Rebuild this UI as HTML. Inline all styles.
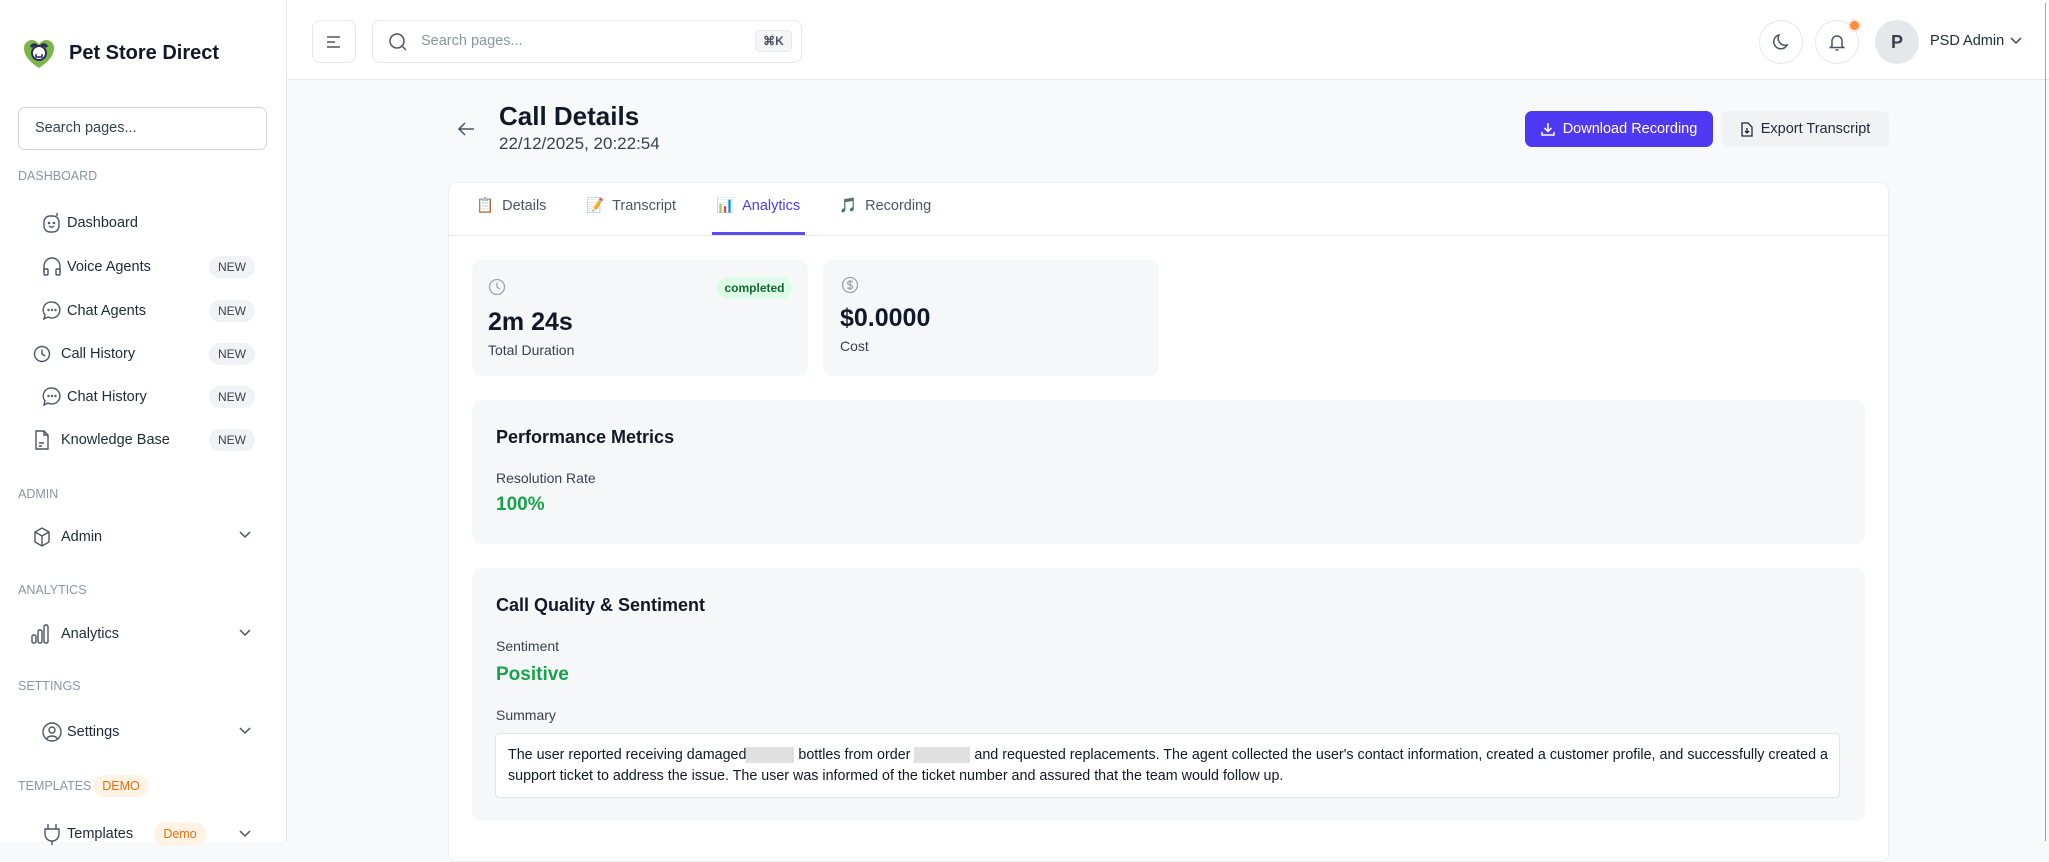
<!DOCTYPE html>
<html><head><meta charset="utf-8"><style>
*{box-sizing:border-box;margin:0;padding:0}
body{width:2049px;height:841px;overflow:hidden;background:#f8f9fb;font-family:"Liberation Sans",sans-serif;color:#111827;position:relative}
.a{position:absolute}
.sb{left:0;top:0;width:287px;height:841px;background:#fff;border-right:1px solid #e5e7eb}
.topbar{left:287px;top:0;width:1762px;height:80px;background:#fff;border-bottom:1px solid #e5e7eb}
.sec{font-size:12.5px;color:#8b93a3;left:18px}
.item{left:42px;font-size:14.5px;color:#1f2937;display:flex;align-items:center;gap:5px;height:24px}
.new{left:209px;width:46px;height:22px;border-radius:11px;background:#f1f2f5;font-size:12px;color:#374151;text-align:center;line-height:22px}
.chev{left:238px}
svg{display:block}
.btnc{border:1px solid #e5e7eb;border-radius:22px;width:44px;height:44px;display:flex;align-items:center;justify-content:center;background:#fff}
.panel{background:#f6f7f9;border-radius:10px}
.lbl{font-size:14px;color:#374151}
</style></head><body>
<div class="a" style="left:0;top:0;width:2049px;height:3px;background:#ecd9cc"></div>
<div class="a sb"></div>
<!-- logo -->
<div class="a" style="left:22px;top:38px"><svg width="34" height="32" viewBox="0 0 34 32"><path d="M17 30C8 24 2 18 2 10 2 5 6 2 10 2c3 0 5 2 7 4 2-2 4-4 7-4 4 0 8 3 8 8 0 8-6 14-15 20z" fill="#7ab648"/><circle cx="17" cy="15" r="7" fill="#fff" stroke="#2d2a5a" stroke-width="2"/><path d="M9 9c2-3 5-3 6 0M25 9c-2-3-5-3-6 0" stroke="#2d2a5a" stroke-width="3" fill="none"/><path d="M14 16v3h6v-3" stroke="#2d2a5a" stroke-width="1.5" fill="none"/></svg></div>
<div class="a" style="left:69px;top:42px;font-size:20px;font-weight:bold;color:#111827">Pet Store Direct</div>
<div class="a" style="left:18px;top:107px;width:249px;height:43px;border:1px solid #d1d5db;border-radius:7px;font-size:14.5px;color:#374151;padding:12px 16px">Search pages...</div>
<div class="a sec" style="top:169px">DASHBOARD</div>
<div class="a item" style="top:211px"><svg width="20" height="22" viewBox="0 0 20 22" fill="none" stroke="#4b5563" stroke-width="1.4"><rect x="2" y="4" width="15" height="16" rx="6"/><circle cx="7" cy="11" r=".6"/><circle cx="12" cy="11" r=".6"/><path d="M7 14c1.5 1.5 3.5 1.5 5 0M15 4V1"/></svg><span>Dashboard</span></div>
<div class="a item" style="top:255px"><svg width="20" height="22" viewBox="0 0 20 22" fill="none" stroke="#4b5563" stroke-width="1.4"><path d="M2 16v-6a8 8 0 0 1 16 0v6"/><rect x="2" y="13" width="4" height="6" rx="1"/><rect x="14" y="13" width="4" height="6" rx="1"/></svg><span>Voice Agents</span></div>
<div class="a new" style="top:256px">NEW</div>
<div class="a item" style="top:299px"><svg width="20" height="22" viewBox="0 0 20 22" fill="none" stroke="#4b5563" stroke-width="1.4"><path d="M10 2a8 8 0 1 1-4 15l-4 2 1-4A8 8 0 0 1 10 2z"/><circle cx="6.5" cy="10" r=".5"/><circle cx="10" cy="10" r=".5"/><circle cx="13.5" cy="10" r=".5"/></svg><span>Chat Agents</span></div>
<div class="a new" style="top:300px">NEW</div>
<div class="a item" style="top:342px;left:33px;gap:10px"><svg width="18" height="18" viewBox="0 0 18 18" fill="none" stroke="#4b5563" stroke-width="1.4"><circle cx="9" cy="9" r="7.5"/><path d="M9 4.5V9l3 2"/></svg><span>Call History</span></div>
<div class="a new" style="top:343px">NEW</div>
<div class="a item" style="top:385px"><svg width="20" height="22" viewBox="0 0 20 22" fill="none" stroke="#4b5563" stroke-width="1.4"><path d="M10 2a8 8 0 1 1-4 15l-4 2 1-4A8 8 0 0 1 10 2z"/><circle cx="6.5" cy="10" r=".5"/><circle cx="10" cy="10" r=".5"/><circle cx="13.5" cy="10" r=".5"/></svg><span>Chat History</span></div>
<div class="a new" style="top:386px">NEW</div>
<div class="a item" style="top:428px;left:33px;gap:10px"><svg width="18" height="20" viewBox="0 0 18 20" fill="none" stroke="#4b5563" stroke-width="1.4"><path d="M3 1h8l4 4v14H3z"/><path d="M11 1v4h4M6 13h5M6 16h3"/></svg><span>Knowledge Base</span></div>
<div class="a new" style="top:429px">NEW</div>
<div class="a sec" style="top:487px">ADMIN</div>
<div class="a item" style="top:525px;left:33px;gap:10px"><svg width="18" height="20" viewBox="0 0 18 20" fill="none" stroke="#4b5563" stroke-width="1.4"><path d="M9 1l7 4v10l-7 4-7-4V5z"/><path d="M2 5l7 4 7-4M9 9v10"/></svg><span>Admin</span></div>
<div class="a chev" style="top:530px"><svg width="14" height="10" viewBox="0 0 14 10" fill="none" stroke="#4b5563" stroke-width="1.5"><path d="M2 2l5 5 5-5"/></svg></div>
<div class="a sec" style="top:583px">ANALYTICS</div>
<div class="a item" style="top:622px;left:31px;gap:12px"><svg width="18" height="20" viewBox="0 0 18 20" fill="none" stroke="#4b5563" stroke-width="1.4"><rect x="1" y="11" width="4" height="8" rx="1.5"/><rect x="7" y="6" width="4" height="13" rx="1.5"/><rect x="13" y="1" width="4" height="18" rx="1.5"/></svg><span>Analytics</span></div>
<div class="a chev" style="top:628px"><svg width="14" height="10" viewBox="0 0 14 10" fill="none" stroke="#4b5563" stroke-width="1.5"><path d="M2 2l5 5 5-5"/></svg></div>
<div class="a sec" style="top:679px">SETTINGS</div>
<div class="a item" style="top:720px"><svg width="20" height="22" viewBox="0 0 20 22" fill="none" stroke="#4b5563" stroke-width="1.4"><circle cx="10" cy="11" r="9"/><circle cx="10" cy="9" r="3"/><path d="M4.5 18c2-4 9-4 11 0"/></svg><span>Settings</span></div>
<div class="a chev" style="top:726px"><svg width="14" height="10" viewBox="0 0 14 10" fill="none" stroke="#4b5563" stroke-width="1.5"><path d="M2 2l5 5 5-5"/></svg></div>
<div class="a sec" style="top:779px">TEMPLATES</div>
<div class="a" style="left:93px;top:775px;width:56px;height:22px;border-radius:11px;background:#fff3e6;color:#ea6c0a;font-size:12.5px;text-align:center;line-height:22px">DEMO</div>
<div class="a item" style="top:822px"><svg width="20" height="22" viewBox="0 0 20 22" fill="none" stroke="#4b5563" stroke-width="1.4"><path d="M6 1v5M14 1v5M3 6h14v5a7 7 0 0 1-14 0zM10 18v4"/></svg><span>Templates</span></div>
<div class="a" style="left:154px;top:822px;width:52px;height:24px;border-radius:12px;background:#fff3e6;color:#ea6c0a;font-size:12.5px;text-align:center;line-height:24px">Demo</div>
<div class="a chev" style="top:829px"><svg width="14" height="10" viewBox="0 0 14 10" fill="none" stroke="#4b5563" stroke-width="1.5"><path d="M2 2l5 5 5-5"/></svg></div>

<!-- topbar -->
<div class="a topbar"></div>
<div class="a" style="left:312px;top:20px;width:44px;height:43px;border:1px solid #e5e7eb;border-radius:8px;display:flex;align-items:center;justify-content:center"><svg width="16" height="14" viewBox="0 0 16 14" stroke="#4b5563" stroke-width="1.5"><path d="M1 2h13M1 7h8M1 12h13"/></svg></div>
<div class="a" style="left:372px;top:20px;width:430px;height:43px;border:1px solid #e5e7eb;border-radius:8px"></div>
<div class="a" style="left:388px;top:32px"><svg width="20" height="20" viewBox="0 0 20 20" fill="none" stroke="#4b5563" stroke-width="1.5"><circle cx="9" cy="9" r="7"/><path d="M14 14l4 4"/></svg></div>
<div class="a" style="left:421px;top:33px;font-size:14.5px;color:#8b93a3">Search pages...</div>
<div class="a" style="left:755px;top:30px;width:37px;height:22px;border:1px solid #e5e7eb;border-radius:5px;background:#f5f6f8;font-size:12px;color:#4b5563;text-align:center;line-height:20px;font-weight:bold">⌘K</div>
<div class="a btnc" style="left:1759px;top:20px"><svg width="20" height="20" viewBox="0 0 20 20" fill="none" stroke="#4b5563" stroke-width="1.5"><path d="M16 13A7 7 0 0 1 8 3a7 7 0 1 0 8 10z"/></svg></div>
<div class="a btnc" style="left:1815px;top:20px"><svg width="20" height="20" viewBox="0 0 20 20" fill="none" stroke="#4b5563" stroke-width="1.5"><path d="M5 14V9a5 5 0 0 1 10 0v5l1.5 1.5h-13zM8.5 18h3"/></svg></div>
<div class="a" style="left:1850px;top:21px;width:9px;height:9px;border-radius:5px;background:#fb8c3c;box-shadow:0 0 0 2px #fde8da"></div>
<div class="a" style="left:1875px;top:20px;width:44px;height:44px;border-radius:22px;background:#e5e7eb;font-size:18px;font-weight:bold;color:#374151;text-align:center;line-height:44px">P</div>
<div class="a" style="left:1930px;top:33px;font-size:14.5px;color:#1f2937">PSD Admin</div>
<div class="a" style="left:2010px;top:37px"><svg width="12" height="8" viewBox="0 0 12 8" fill="none" stroke="#374151" stroke-width="1.5"><path d="M1 1l5 5 5-5"/></svg></div>
<div class="a" style="left:2045px;top:3px;width:1px;height:838px;background:#9ca3af"></div>

<!-- header -->
<div class="a" style="left:456px;top:120px"><svg width="20" height="18" viewBox="0 0 20 18" fill="none" stroke="#4b5563" stroke-width="1.5"><path d="M18 9H3M9 3L3 9l6 6"/></svg></div>
<div class="a" style="left:499px;top:101px;font-size:26px;font-weight:bold;color:#111827">Call Details</div>
<div class="a" style="left:499px;top:134px;font-size:17px;color:#374151">22/12/2025, 20:22:54</div>
<div class="a" style="left:1525px;top:111px;width:188px;height:36px;background:#5039f2;border-radius:7px;color:#fff;font-size:14.5px;display:flex;align-items:center;justify-content:center;gap:8px"><svg width="14" height="14" viewBox="0 0 14 14" fill="none" stroke="#fff" stroke-width="1.5"><path d="M7 1v8M3.5 6L7 9.5 10.5 6M1 10v3h12v-3"/></svg>Download Recording</div>
<div class="a" style="left:1722px;top:111px;width:167px;height:36px;background:#f1f2f4;border-radius:7px;color:#1f2937;font-size:14.5px;display:flex;align-items:center;justify-content:center;gap:8px"><svg width="12" height="15" viewBox="0 0 12 15" fill="none" stroke="#1f2937" stroke-width="1.3"><path d="M1 1h6l4 4v9H1z"/><path d="M6 6v5M4 9l2 2 2-2"/></svg>Export Transcript</div>

<!-- card -->
<div class="a" style="left:448px;top:182px;width:1441px;height:680px;background:#fff;border-radius:8px;border:1px solid #eceef1"></div>
<div class="a" style="left:448px;top:235px;width:1441px;height:1px;background:#e5e7eb"></div>
<div class="a" style="left:476px;top:197px;font-size:14.5px;color:#4b5563">📋 <span style="margin-left:4px">Details</span></div>
<div class="a" style="left:586px;top:197px;font-size:14.5px;color:#4b5563">📝 <span style="margin-left:4px">Transcript</span></div>
<div class="a" style="left:716px;top:197px;font-size:14.5px;color:#4f39f6">📊 <span style="margin-left:4px">Analytics</span></div>
<div class="a" style="left:712px;top:232px;width:93px;height:3px;background:#5b4bf5"></div>
<div class="a" style="left:839px;top:197px;font-size:14.5px;color:#4b5563">🎵 <span style="margin-left:4px">Recording</span></div>

<div class="a panel" style="left:472px;top:260px;width:336px;height:116px"></div>
<div class="a" style="left:488px;top:278px"><svg width="18" height="18" viewBox="0 0 18 18" fill="none" stroke="#9ca3af" stroke-width="1.3"><circle cx="9" cy="9" r="7.5"/><path d="M9 4.5V9l3 2"/></svg></div>
<div class="a" style="left:717px;top:277px;width:75px;height:22px;border-radius:11px;background:#dcfce7;color:#166534;font-size:12px;font-weight:bold;text-align:center;line-height:22px">completed</div>
<div class="a" style="left:488px;top:308px;font-size:25px;font-weight:bold;color:#111827">2m 24s</div>
<div class="a" style="left:488px;top:342px;font-size:14px;color:#374151">Total Duration</div>
<div class="a panel" style="left:823px;top:260px;width:336px;height:116px"></div>
<div class="a" style="left:841px;top:276px"><svg width="18" height="18" viewBox="0 0 18 18" fill="none" stroke="#9ca3af" stroke-width="1.3"><circle cx="9" cy="9" r="7.5"/><path d="M11.5 6.5c-.5-1-1.5-1.3-2.5-1.3-1.4 0-2.4.8-2.4 1.8 0 2.5 5 1.3 5 4 0 1-1 1.8-2.6 1.8-1.1 0-2-.4-2.5-1.3M9 4v10"/></svg></div>
<div class="a" style="left:840px;top:304px;font-size:25px;font-weight:bold;color:#111827">$0.0000</div>
<div class="a" style="left:840px;top:338px;font-size:14px;color:#374151">Cost</div>

<div class="a panel" style="left:472px;top:400px;width:1393px;height:144px"></div>
<div class="a" style="left:496px;top:427px;font-size:18px;font-weight:bold">Performance Metrics</div>
<div class="a lbl" style="left:496px;top:470px">Resolution Rate</div>
<div class="a" style="left:496px;top:494px;font-size:19px;font-weight:bold;color:#16a34a">100%</div>

<div class="a panel" style="left:472px;top:568px;width:1393px;height:253px"></div>
<div class="a" style="left:496px;top:595px;font-size:18px;font-weight:bold">Call Quality &amp; Sentiment</div>
<div class="a lbl" style="left:496px;top:638px">Sentiment</div>
<div class="a" style="left:496px;top:664px;font-size:19px;font-weight:bold;color:#16a34a">Positive</div>
<div class="a lbl" style="left:496px;top:707px">Summary</div>
<div class="a" style="left:495px;top:733px;width:1345px;height:65px;background:#fff;border:1px solid #e2e4e9;border-radius:4px"></div>
<div class="a" style="left:508px;top:745px;width:1325px;font-size:14.3px;line-height:21px;color:#111827">The user reported receiving damaged<span style="display:inline-block;width:48px;height:16px;background:#e0e0e0;vertical-align:middle"></span> bottles from order <span style="display:inline-block;width:56px;height:16px;background:#e0e0e0;vertical-align:middle"></span> and requested replacements. The agent collected the user's contact information, created a customer profile, and successfully created a<br>support ticket to address the issue. The user was informed of the ticket number and assured that the team would follow up.</div>
</body></html>
